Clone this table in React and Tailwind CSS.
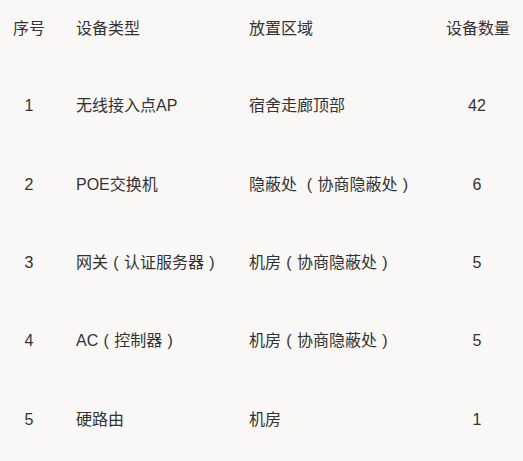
import React from "react";

const rows = [
  { id: 1, type: "无线接入点AP", area: "宿舍走廊顶部", count: 42 },
  { id: 2, type: "POE交换机", area: "隐蔽处 （协商隐蔽处）", count: 6 },
  { id: 3, type: "网关（认证服务器）", area: "机房（协商隐蔽处）", count: 5 },
  { id: 4, type: "AC（控制器）", area: "机房（协商隐蔽处）", count: 5 },
  { id: 5, type: "硬路由", area: "机房", count: 1 },
];

// full-width brackets drawn centred in a one-em cell, as in the original
const Text = ({ value }) =>
  value.split(/([（）])/).map((part, i) =>
    part === "（" || part === "）" ? (
      <span key={i} className="inline-block w-[16px] text-center">
        {part === "（" ? "(" : ")"}
      </span>
    ) : (
      <React.Fragment key={i}>{part}</React.Fragment>
    )
  );

const App = () => {
  return (
    <div
      className="w-[523px] h-[461px] bg-[#f9f8f6] text-[#333333] text-[16px] leading-[20px] overflow-hidden"
      style={{ fontFamily: '"Liberation Sans", "Noto Sans CJK SC", sans-serif' }}
    >
      {/* header */}
      <div className="grid grid-cols-[58px_191px_197px_62px] h-[67px] pt-[19px]">
        <div className="text-center">序号</div>
        <div className="pl-[18px]">设备类型</div>
        <div>放置区域</div>
        <div className="text-center whitespace-nowrap">设备数量</div>
      </div>

      {rows.map((row) => (
        <div
          key={row.id}
          className="grid grid-cols-[58px_191px_197px_62px] h-[78.4px] items-center"
        >
          <div className="text-center">{row.id}</div>
          <div className="pl-[18px] whitespace-nowrap">
            <Text value={row.type} />
          </div>
          <div className="whitespace-nowrap">
            <Text value={row.area} />
          </div>
          <div className="text-center">{row.count}</div>
        </div>
      ))}
    </div>
  );
};

export default App;
